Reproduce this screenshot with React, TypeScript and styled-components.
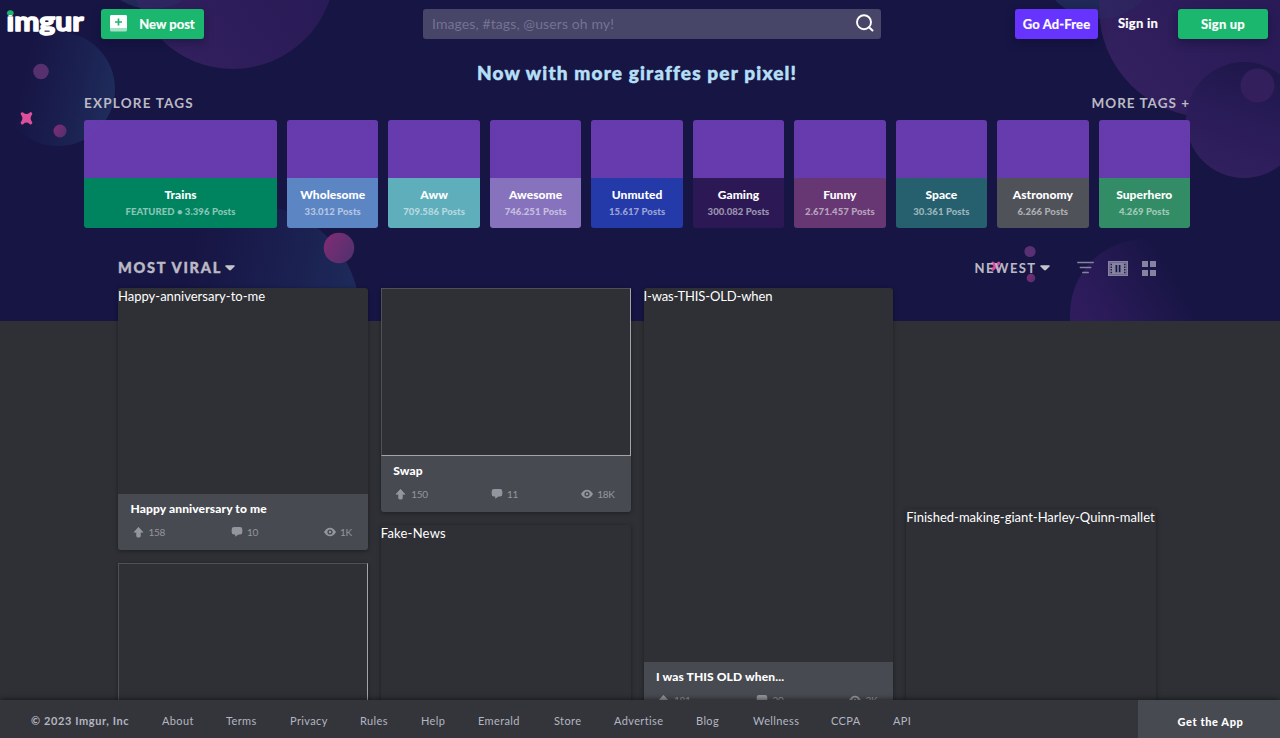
import React from 'react';
import styled, { createGlobalStyle } from 'styled-components';

const GlobalStyle = createGlobalStyle`
  * { box-sizing: border-box; }
  body { margin: 0; background: #2e3035; font-family: Lato, "Open Sans", sans-serif; color: #fff; }
`;

const Page = styled.div`
  position: relative;
  display: flex;
  flex-direction: column;
  height: 738px;
  overflow: hidden;
`;

const Backdrop = styled.svg`
  position: absolute;
  top: 0;
  left: 0;
  width: 100%;
  height: 321px;
`;

const Main = styled.div`
  position: relative;
  flex: 1;
  min-height: 0;
  overflow: hidden;
`;

const NavBar = styled.header`
  display: grid;
  grid-template-columns: 423px 458px 1fr;
  align-items: start;
  height: 48px;
  padding: 8px 12px 0 0;
`;

const NavLeft = styled.div`
  display: flex;
  align-items: flex-start;
  padding-left: 5px;
`;

const Logo = styled.svg`
  display: block;
  width: 82px;
  height: 32px;
  margin-right: 14px;
  overflow: visible;
`;

const NavButton = styled.button<{ $bg: string; $w: number; $ls?: number; $lift?: number }>`
  display: flex;
  align-items: center;
  justify-content: center;
  width: ${p => p.$w}px;
  height: 30px;
  margin-top: 1px;
  padding: 0 0 ${p => p.$lift ?? 0}px;
  border: 0;
  border-radius: 3px;
  background: ${p => p.$bg};
  box-shadow: ${p => (p.$bg === 'transparent' ? 'none' : '0 4px 8px rgba(10, 10, 40, 0.35)')};
  color: #fff;
  font: 700 13px/28px Lato, sans-serif;
  letter-spacing: ${p => p.$ls ?? 0.15}px;
  -webkit-text-stroke: 0.2px currentColor;
  white-space: nowrap;
`;

const PlusIcon = styled.svg`
  width: 17px;
  height: 17px;
  margin-right: 12px;
`;

const SearchBox = styled.div`
  display: flex;
  align-items: center;
  justify-content: space-between;
  height: 30px;
  margin-top: 1px;
  padding: 0 6px 0 9px;
  border-radius: 3px;
  background: #474568;
  color: #747391;
  font-size: 14px;
  line-height: 28px;
  letter-spacing: 0.1px;
`;

const NavRight = styled.div`
  display: flex;
  justify-content: flex-end;
`;

const Tagline = styled.h1`
  height: 48px;
  margin: 0;
  padding-right: 6px;
  text-align: center;
  color: #b5dff5;
  font: 900 19px/49px Lato, sans-serif;
  letter-spacing: 1.15px;
  -webkit-text-stroke: 0.5px currentColor;
`;

const TagSection = styled.section`
  width: 1106px;
  margin-left: 84px;
`;

const TagHeading = styled.div`
  display: flex;
  justify-content: space-between;
  height: 24px;
  color: #bbb9c4;
  font: 700 13.5px/15px Lato, sans-serif;
  letter-spacing: 1.2px;
  & span:last-child { letter-spacing: 1px; }
`;

const TagList = styled.div`
  display: grid;
  grid-template-columns: 193px repeat(9, 1fr);
  gap: 10px;
`;

const TagCard = styled.div<{ $bg: string }>`
  height: 108px;
  padding-top: 58px;
  border-radius: 3px;
  overflow: hidden;
  text-align: center;
  white-space: nowrap;
  background: linear-gradient(rgba(107, 61, 179, 0.94) 58px, ${p => p.$bg} 58px);
`;

const TagName = styled.div`
  padding-top: 9px;
  font: 900 12px/15px Lato, sans-serif;
  letter-spacing: 0.05px;
`;

const TagCount = styled.div`
  padding-top: 3px;
  color: rgba(255, 255, 255, 0.55);
  font: 900 9.5px/14px Lato, sans-serif;
  letter-spacing: 0.08px;
`;

const Toolbar = styled.div`
  display: flex;
  align-items: center;
  width: 1038px;
  height: 20px;
  margin: 30px 0 10px 118px;
  color: #bbbac4;
`;

const SortLabel = styled.div<{ $main?: boolean }>`
  display: flex;
  align-items: center;
  gap: ${p => (p.$main ? 2 : 2.5)}px;
  font: ${p => (p.$main ? 900 : 700)} ${p => (p.$main ? 14.5 : 13)}px/20px Lato, sans-serif;
  letter-spacing: ${p => (p.$main ? 1.75 : 1.4)}px;
  -webkit-text-stroke: ${p => (p.$main ? 0.4 : 0.1)}px currentColor;
  margin-right: ${p => (p.$main ? 'auto' : '26px')};
`;

const ToolIcons = styled.div`
  display: flex;
  align-items: center;
  gap: 14px;
  & svg { display: block; }
`;

const Grid = styled.main`
  display: grid;
  grid-template-columns: repeat(4, 1fr);
  gap: 13px;
  width: 1038px;
  margin-left: 118px;
`;

const Column = styled.div<{ $offset?: number }>`
  display: flex;
  flex-direction: column;
  gap: 13px;
  min-width: 0;
  padding-top: ${p => p.$offset ?? 0}px;
`;

const Post = styled.article`
  border-radius: 3px;
  background: #2e3035;
  box-shadow: 0 1px 4px rgba(0, 0, 0, 0.38);
`;

const PostImage = styled.div<{ $h: number; $framed?: boolean; $ls?: number }>`
  height: ${p => p.$h}px;
  border: ${p => (p.$framed ? 1 : 0)}px solid;
  border-color: #505154 #a4a4a6 #a4a4a6 #505154;
  font: 13px/16px Lato, sans-serif;
  letter-spacing: ${p => p.$ls ?? 0}px;
  white-space: nowrap;
`;

const PostInfo = styled.div`
  height: 56px;
  padding: 7px 12px 0 12.5px;
  border-radius: 0 0 3px 3px;
  background: #484a51;
`;

const PostTitle = styled.h2`
  margin: 0;
  font: 900 12px/15px Lato, sans-serif;
  letter-spacing: 0.12px;
`;

const Stats = styled.div`
  display: flex;
  justify-content: space-between;
  padding: 9px 4px 0 2px;
`;

const Stat = styled.span`
  display: flex;
  align-items: center;
  gap: 4px;
  color: #94969f;
  font: 10px/14px Lato, sans-serif;
  letter-spacing: -0.3px;
`;

const FooterBar = styled.footer`
  position: relative;
  display: flex;
  align-items: center;
  height: 38px;
  padding-left: 31px;
  background: #34353a;
  box-shadow: 0 -1px 5px rgba(0, 0, 0, 0.5);
  color: #b3b6c2;
  font: 11px/38px Lato, sans-serif;
`;

const FooterItem = styled.a<{ $w: number; $bold?: boolean }>`
  width: ${p => p.$w}px;
  padding-top: 4px;
  font-weight: ${p => (p.$bold ? 700 : 400)};
  letter-spacing: ${p => (p.$bold ? 0.6 : 0.38)}px;
  white-space: nowrap;
`;

const GetApp = styled.div`
  width: 142px;
  height: 38px;
  margin-left: auto;
  padding: 3px 0 0 3px;
  background: #484a51;
  color: #fff;
  text-align: center;
  font-weight: 900;
  letter-spacing: 0.6px;
`;

const tags: [string, string, string][] = [
  ['Trains', 'FEATURED • 3.396 Posts', '#008460'],
  ['Wholesome', '33.012 Posts', '#5c85c4'],
  ['Aww', '709.586 Posts', '#5faebc'],
  ['Awesome', '746.251 Posts', '#8773bd'],
  ['Unmuted', '15.617 Posts', '#253aa9'],
  ['Gaming', '300.082 Posts', '#2b1855'],
  ['Funny', '2.671.457 Posts', '#663772'],
  ['Space', '30.361 Posts', '#265f6e'],
  ['Astronomy', '6.266 Posts', '#50525a'],
  ['Superhero', '4.269 Posts', '#328d66'],
];

const links: [string, number][] = [
  ['About', 64], ['Terms', 64], ['Privacy', 70], ['Rules', 61], ['Help', 57], ['Emerald', 76],
  ['Store', 60], ['Advertise', 82], ['Blog', 57], ['Wellness', 78], ['CCPA', 62], ['API', 30],
];

const Caret = () => (
  <svg width="12" height="8" viewBox="0 0 12 8"><path d="M1.800 1.200h8.400q1 .3.3 1.200L7 6.100q-1 .9-2 0L1.500 2.400q-.7-.9.3-1.200z" fill="#c6c5cc" /></svg>
);

const Background = () => (
  <Backdrop viewBox="0 0 1280 321" preserveAspectRatio="none">
    <defs>
      <linearGradient id="blue" x1="0.1" y1="0.4" x2="1" y2="0.6">
        <stop offset="0.1" stopColor="#21376a" stopOpacity="0" />
        <stop offset="0.55" stopColor="#21376a" stopOpacity="0.3" />
        <stop offset="1" stopColor="#233a68" stopOpacity="0.65" />
      </linearGradient>
      <linearGradient id="purple" x1="0.1" y1="0.9" x2="0.9" y2="0.3">
        <stop offset="0" stopColor="#34215f" />
        <stop offset="0.4" stopColor="#2d1d5a" />
        <stop offset="1" stopColor="#271a55" />
      </linearGradient>
      <linearGradient id="ring" x1="0.25" y1="1" x2="0.6" y2="0">
        <stop offset="0" stopColor="#32205f" />
        <stop offset="0.5" stopColor="#2a1c58" />
        <stop offset="1" stopColor="#1d174a" />
      </linearGradient>
      <linearGradient id="fade" x1="0" y1="0.55" x2="0.7" y2="0.15">
        <stop offset="0" stopColor="#301c5e" />
        <stop offset="0.3" stopColor="#2b1b59" />
        <stop offset="0.95" stopColor="#171544" />
      </linearGradient>
      <linearGradient id="pink" x1="0" y1="0" x2="1" y2="0.6">
        <stop offset="0" stopColor="#822c74" />
        <stop offset="1" stopColor="#56306f" />
      </linearGradient>
    </defs>
    <rect width="1280" height="321" fill="#171544" />
    <circle cx="58" cy="89" r="57" fill="url(#blue)" />
    <circle cx="152" cy="-51" r="60" fill="#1e2450" />
    <circle cx="233" cy="-33" r="102" fill="url(#purple)" />
    <circle cx="152" cy="-51" r="60" fill="#2b3568" opacity="0.35" />
    <circle cx="1099" cy="-41" r="60" fill="#1b2350" />
    <circle cx="1208" cy="8" r="109" fill="url(#purple)" />
    <circle cx="1099" cy="-41" r="60" fill="#2b3568" opacity="0.3" />
    <circle cx="1244" cy="120" r="58" fill="url(#ring)" />
    <circle cx="1257.500" cy="85.500" r="17" fill="#3a2260" opacity="0.75" />
    <circle cx="250" cy="315" r="110" fill="url(#blue)" />
    <circle cx="1145" cy="314" r="75" fill="url(#fade)" />
    <circle cx="339" cy="248" r="15.300" fill="url(#pink)" />
    <circle cx="41" cy="71.500" r="7.800" fill="#56306f" />
    <circle cx="60" cy="131" r="6.500" fill="url(#pink)" />
    <circle cx="1030" cy="251.500" r="5.600" fill="#583073" />
    <circle cx="1031" cy="278" r="4.300" fill="url(#pink)" />
    <path d="M22.300 113.800q4.200 4 8.400 0q-3.500 4.500 0 9q-4.200-4-8.400 0q3.500-4.500 0-9z" fill="#dc4f9b" stroke="#dc4f9b" strokeWidth="3.200" strokeLinejoin="round" />
    <path d="M992.800 263.200l6 6m0-6l-6 6" fill="none" stroke="#d24c98" strokeWidth="3.200" strokeLinecap="round" />
  </Backdrop>
);

const PostCard = ({ h, alt, title, stats, framed, ls }: { h: number; alt?: string; title?: string; stats?: string[]; framed?: boolean; ls?: number }) => (
  <Post>
    <PostImage $h={h} $framed={framed} $ls={ls}>{alt}</PostImage>
    {title && stats && (
      <PostInfo>
        <PostTitle>{title}</PostTitle>
        <Stats>
          <Stat>
            <svg width="12" height="12" viewBox="0 0 12 12"><path d="M5.500 1.300L1.100 6.200h2.600v4.100q0 .8.8.8h2q.8 0 .8-.8V6.200h2.600z" fill="#94969f" stroke="#94969f" strokeWidth="0.800" strokeLinejoin="round" /></svg>
            {stats[0]}
          </Stat>
          <Stat>
            <svg width="12" height="12" viewBox="0 0 12 12"><path d="M3 1h6q2.300 0 2.300 2.300v2.900q0 2.300-2.300 2.300H7.500L4.200 10.800V8.500H3Q.7 8.500.7 6.200V3.300Q.7 1 3 1z" fill="#94969f" /></svg>
            {stats[1]}
          </Stat>
          <Stat>
            <svg width="12" height="12" viewBox="0 0 12 12"><path d="M0 6q2.600-4.300 6-4.300T12 6q-2.600 4.300-6 4.300T0 6z" fill="#94969f" /><circle cx="6" cy="6" r="1.900" fill="#94969f" stroke="#484a51" strokeWidth="1.400" /></svg>
            {stats[2]}
          </Stat>
        </Stats>
      </PostInfo>
    )}
  </Post>
);

export default function App() {
  return (
    <Page>
      <GlobalStyle />
      <Background />
      <Main>
        <NavBar>
          <NavLeft>
            <Logo viewBox="0 0 82 32">
              <defs>
                <linearGradient id="dot" gradientUnits="userSpaceOnUse" x1="0" y1="0" x2="0" y2="32">
                  <stop offset="0.230" stopColor="#1bb76e" />
                  <stop offset="0.230" stopColor="#fff" />
                </linearGradient>
              </defs>
              <text x="1.500" y="22.800" textLength="77" lengthAdjust="spacingAndGlyphs" fontFamily="Lato, sans-serif" fontWeight="700" fontSize="27" fill="#fff" stroke="#fff" strokeWidth="1.600" strokeLinejoin="round">
                <tspan fill="url(#dot)" stroke="url(#dot)">i</tspan>mgur
              </text>
            </Logo>
            <NavButton $bg="#1bb76e" $w={103} $ls={0} $lift={1}>
              <PlusIcon viewBox="0 0 17 17">
                <rect width="17" height="16.500" rx="1.500" fill="#a5e2c5" />
                <path d="M1.500 0h14q1.500 0 1.500 1.500V13H0V1.500Q0 0 1.500 0z" fill="#fff" />
                <path d="M8.500 3.500v7M5 7h7" stroke="#1bb76e" strokeWidth="1.700" />
              </PlusIcon>
              New post
            </NavButton>
          </NavLeft>
          <SearchBox>
            Images, #tags, @users oh my!
            <svg width="20" height="20" viewBox="0 0 20 20"><circle cx="9" cy="8.200" r="7" fill="none" stroke="#fff" strokeWidth="1.900" /><path d="M14 13.200l3.500 3.300" stroke="#fff" strokeWidth="2" strokeLinecap="round" /></svg>
          </SearchBox>
          <NavRight>
            <NavButton $bg="#6633ff" $w={83}>Go Ad-Free</NavButton>
            <NavButton $bg="transparent" $w={80} $ls={0.25} $lift={2}>Sign in</NavButton>
            <NavButton $bg="#1bb76e" $w={90} $ls={0.2}>Sign up</NavButton>
          </NavRight>
        </NavBar>
        <Tagline>Now with more giraffes per pixel!</Tagline>
        <TagSection>
          <TagHeading><span>EXPLORE TAGS</span><span>MORE TAGS +</span></TagHeading>
          <TagList>
            {tags.map(([name, count, bg]) => (
              <TagCard key={name} $bg={bg}>
                <TagName>{name}</TagName>
                <TagCount>{count}</TagCount>
              </TagCard>
            ))}
          </TagList>
        </TagSection>
        <Toolbar>
          <SortLabel $main>MOST VIRAL<Caret /></SortLabel>
          <SortLabel>NEWEST<Caret /></SortLabel>
          <ToolIcons>
            <svg width="17" height="14" viewBox="0 0 17 14"><path d="M.8 1.500h15.400M3.300 6.500h10.400M5.800 11.500h5.400" stroke="#85839f" strokeWidth="1.500" strokeLinecap="round" /></svg>
            <svg width="20" height="15" viewBox="0 0 20 15">
              <rect x="0.800" y="0.800" width="18.400" height="13.400" fill="none" stroke="#85839f" strokeWidth="1.600" />
              <rect x="4" y="1.500" width="12" height="12" fill="#85839f" />
              <path d="M2 2v11M18 2v11" stroke="#85839f" strokeWidth="1" />
              <path d="M3 1.500v12M17 1.500v12" stroke="#85839f" strokeWidth="2" strokeDasharray="1.200 1.500" />
              <path d="M8.400 4v7.200M11.600 4v7.200" stroke="#171544" strokeWidth="1.700" />
            </svg>
            <svg width="14" height="15" viewBox="0 0 14 15"><path d="M0 0h6v6H0zM8 0h6v6H8zM0 9h6v6H0zM8 9h6v6H8z" fill="#85839f" /></svg>
          </ToolIcons>
        </Toolbar>
        <Grid>
          <Column>
            <PostCard h={206} alt="Happy-anniversary-to-me" title="Happy anniversary to me" stats={['158', '10', '1K']} />
            <PostCard h={260} framed />
          </Column>
          <Column>
            <PostCard h={168} framed title="Swap" stats={['150', '11', '18K']} />
            <PostCard h={300} alt="Fake-News" ls={0.22} />
          </Column>
          <Column>
            <PostCard h={374} alt="I-was-THIS-OLD-when" ls={-0.13} title="I was THIS OLD when..." stats={['181', '20', '2K']} />
          </Column>
          <Column $offset={221}>
            <PostCard h={300} alt="Finished-making-giant-Harley-Quinn-mallet" />
          </Column>
        </Grid>
      </Main>
      <FooterBar>
        <FooterItem $w={131} $bold>© 2023 Imgur, Inc</FooterItem>
        {links.map(([name, w]) => <FooterItem key={name} $w={w}>{name}</FooterItem>)}
        <GetApp>Get the App</GetApp>
      </FooterBar>
    </Page>
  );
}
